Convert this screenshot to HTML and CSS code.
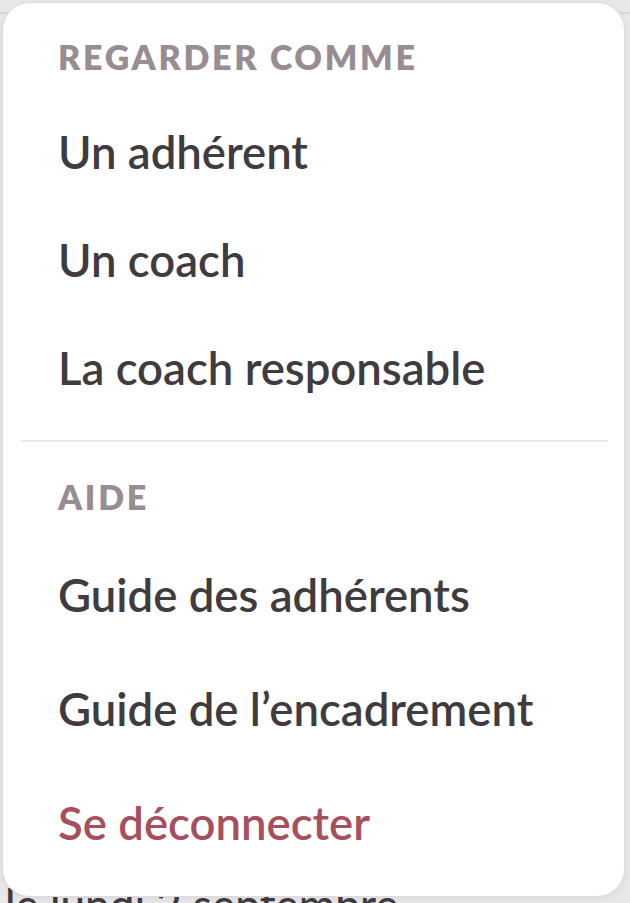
FILE: index.html
```html
<!DOCTYPE html>
<html lang="fr">
<head>
<meta charset="utf-8">
<title>Menu</title>
<link rel="stylesheet" href="styles.css">
</head>
<body>
<div class="page">
  <div class="page-bar"></div>
  <p class="page-date">le lundi 2 septembre</p>
</div>
<nav class="menu">
  <section class="group group-top">
    <h2 class="group-title">Regarder comme</h2>
    <ul class="items items-a">
      <li class="item">Un adhérent</li>
      <li class="item">Un coach</li>
      <li class="item">La coach responsable</li>
    </ul>
  </section>
  <hr class="divider">
  <section class="group group-bottom">
    <h2 class="group-title">Aide</h2>
    <ul class="items items-b">
      <li class="item">Guide des adhérents</li>
      <li class="item">Guide de l’encadrement</li>
      <li class="item item-danger">Se déconnecter</li>
    </ul>
  </section>
</nav>
</body>
</html>
```

FILE: styles.css
```css
* { box-sizing: border-box; }
html, body { margin: 0; padding: 0; }
body {
  width: 630px;
  height: 903px;
  overflow: hidden;
  background: #e9e7ea;
  font-family: "Lato", "Noto Sans", sans-serif;
  position: relative;
}
.page { padding-top: 12px; }
.page-bar { height: 2px; background: #dcd9dc; }
.page-date {
  margin: 864px 0 0 5px;
  font-size: 44px;
  line-height: 52px;
  font-weight: 500;
  color: #3f3b3f;
  white-space: nowrap;
}
.menu {
  position: absolute;
  top: 2px;
  left: 2px;
  width: 623px;
  height: 895px;
  background: #ffffff;
  border: 1px solid #dedbde;
  border-radius: 28px;
  box-shadow: 0 2px 6px rgba(60, 50, 60, 0.08);
  padding: 34px 0 0 0;
}
.group { padding-left: 55px; }
.group-title {
  margin: 0;
  font-size: 34px;
  line-height: 40px;
  font-weight: 800;
  letter-spacing: 2.7px;
  text-transform: uppercase;
  color: #978d93;
}
.items { list-style: none; margin: 0; padding: 0; }
.items-a { margin-top: 21px; }
.items-b { margin-top: 21px; }
.item {
  font-size: 45.5px;
  font-weight: 600;
  color: #3f3b3f;
  white-space: nowrap;
}
.items-a .item { height: 108px; line-height: 108px; }
.items-b .item { height: 114px; line-height: 114px; }
.item-danger { color: #a6505d; }
.divider {
  margin: 18px 16px 35px 18px;
  border: 0;
  height: 2px;
  background: #ebe8eb;
}
```
